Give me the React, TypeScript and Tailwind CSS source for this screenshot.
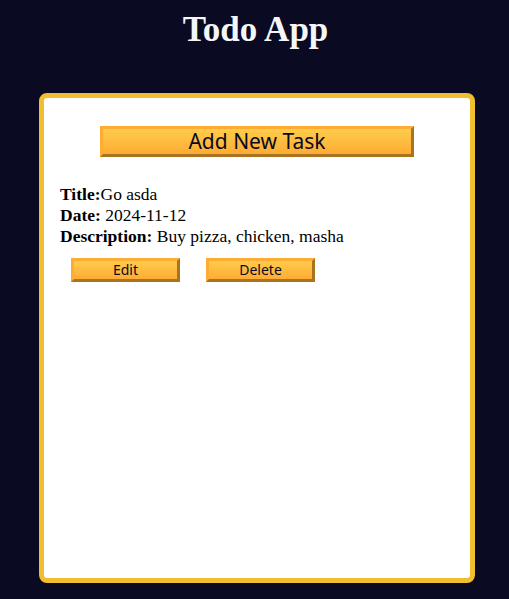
const tasks = [
  { id: 1, title: 'Go asda', date: '2024-11-12', description: 'Buy pizza, chicken, masha' },
];

const btn =
  "border-[3px] [border-style:outset] border-[#feac32] bg-[#feac32] bg-[linear-gradient(#fecc4c,#ffac33)] text-[#0a0a23] font-['Noto_Sans',sans-serif] leading-none";

export default function App() {
  return (
    <div className="min-h-[599px] bg-[#0a0a23] font-['Liberation_Serif',serif] text-black">
      <h1 className="pt-[9px] pl-[2px] text-center text-[35px] font-bold leading-[42px] text-[#f5f6f7]">
        Todo App
      </h1>
      <div className="ml-[39px] mt-[42px] h-[490px] w-[436px] rounded-[8px] border-[5px] border-[#f1be32] bg-white">
        <div className="flex justify-center pt-[28px]">
          <button className={`${btn} h-[31px] w-[314px] pb-[1px] text-[21px]`}>Add New Task</button>
        </div>
        <div className="mt-[27px] px-[16px]">
          {tasks.map((t) => (
            <div key={t.id}>
              <p className="text-[17.5px] leading-[21px]">
                <strong>Title:</strong>
                {t.title}
              </p>
              <p className="text-[17.5px] leading-[21px]">
                <strong>Date:</strong> {t.date}
              </p>
              <p className="text-[17.5px] leading-[21px]">
                <strong>Description:</strong> {t.description}
              </p>
              <div className="mt-[11px] flex gap-[26px] pl-[11px]">
                <button className={`${btn} h-[24px] w-[109px] text-[14px]`}>Edit</button>
                <button className={`${btn} h-[24px] w-[109px] text-[14px]`}>Delete</button>
              </div>
            </div>
          ))}
        </div>
      </div>
    </div>
  );
}
